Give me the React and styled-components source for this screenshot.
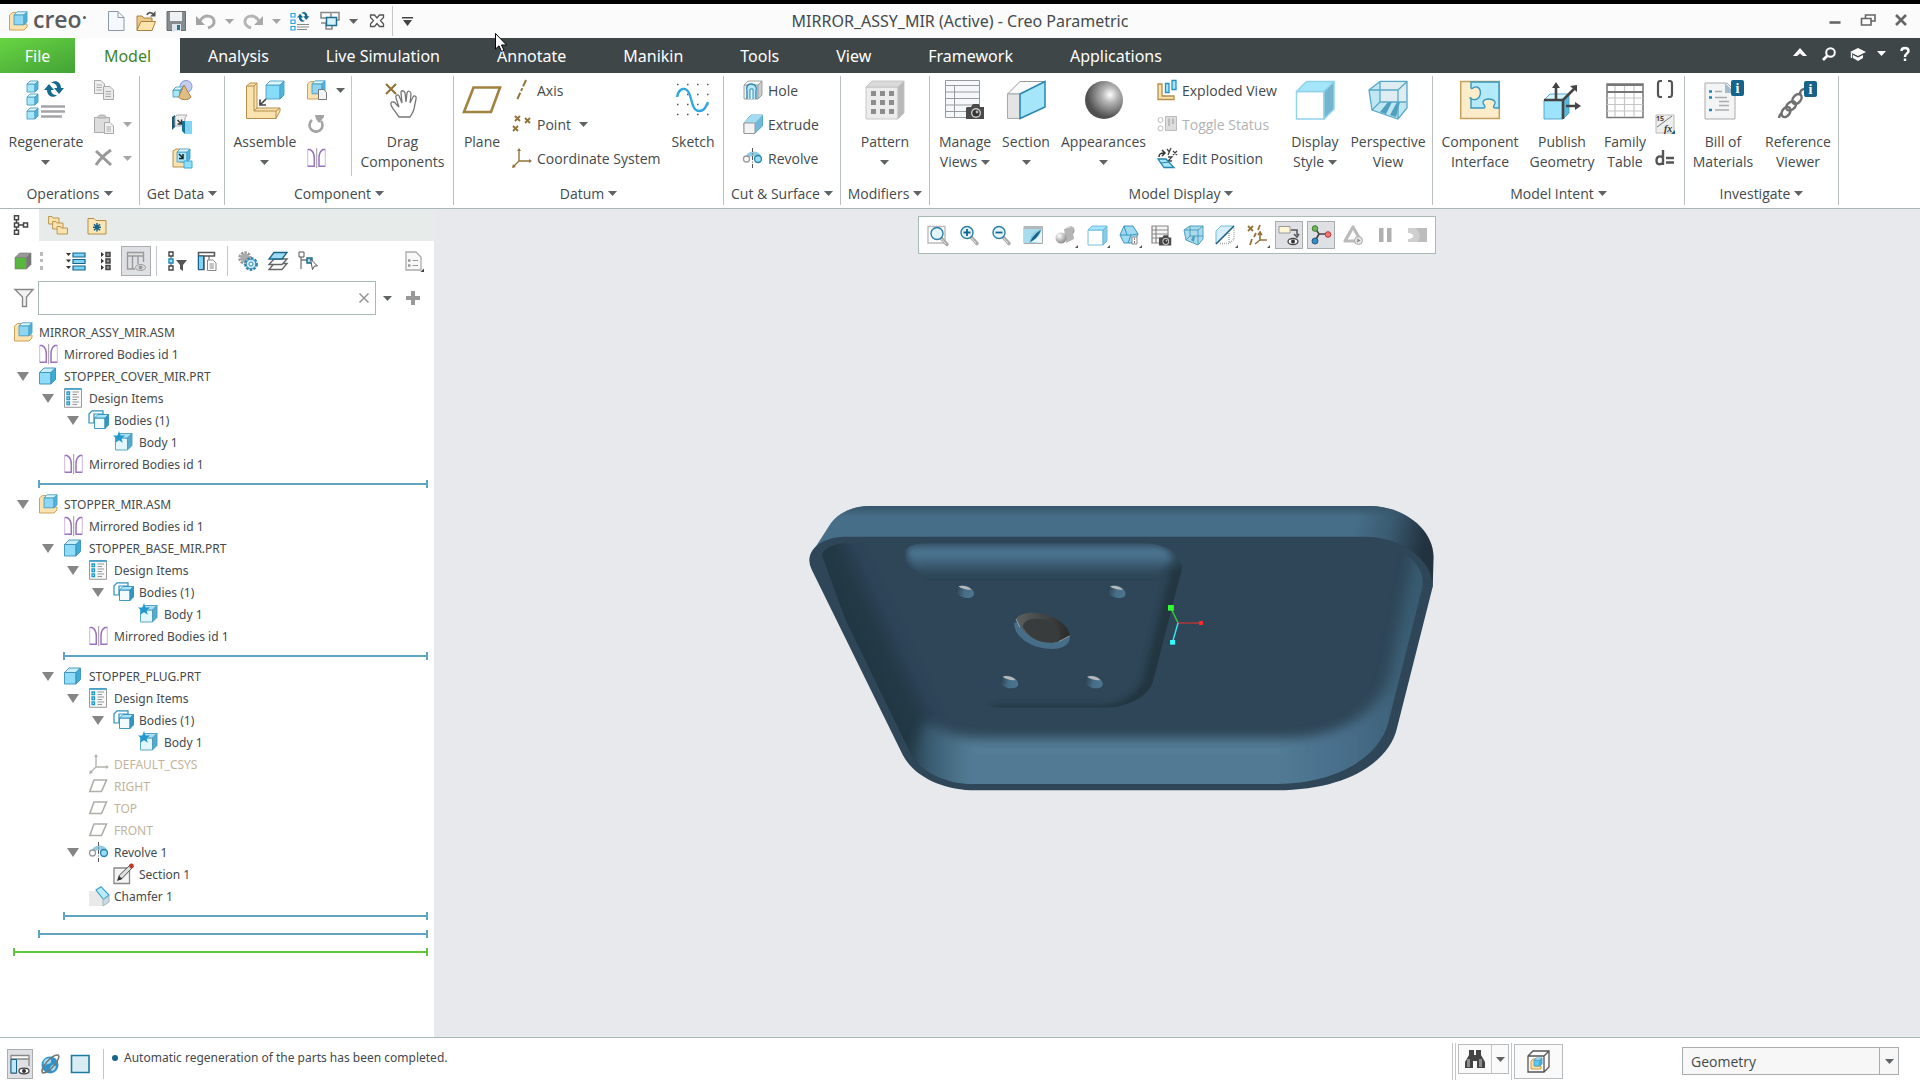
import React, { useState } from "react";
import styled, { createGlobalStyle } from "styled-components";

const GlobalStyle = createGlobalStyle`
  * { box-sizing: border-box; }
  body {
    margin: 0;
    background: #e8e9ed;
    color: #444a4c;
    font-family: "Open Sans", "Noto Sans", sans-serif;
    font-size: 14px;
  }
  button, input, select { font: inherit; color: inherit; }
`;

const UI_FONT = `"Noto Sans", "Open Sans", sans-serif`;
const SKY = "#a5e6fb";
const BLUE = "#2a86ad";
const TAN = "#fbe3b0";
const TANLINE = "#b58f4a";
const GOLD = "#94733a";

// Cubo con cara frontal, superior y lateral
const Cube = ({ x, y, s, d = s * 0.3, f = SKY, t = "#dff6fe", r = "#4fb4dc", line = "#4a9fc4", lw = 0.9 }) => (
  <g stroke={line} strokeWidth={lw} strokeLinejoin="round">
    <path d={`M${x} ${y + d}h${s - d}v${s - d}h${d - s}z`} fill={f} />
    <path d={`M${x} ${y + d}l${d} ${-d}h${s - d}l${-d} ${d}z`} fill={t} />
    <path d={`M${x + s - d} ${y + d}l${d} ${-d}v${s - d}l${-d} ${d}z`} fill={r} />
  </g>
);

const RegenArrows = () => (
  <g fill="#156a8e">
    <path d="M0 9L5 3 10 9H7C7 12 9 14 13 14 9 18 3 15 3 9z" />
    <path d="M20 7L15 13 10 7H13C13 4 11 2 7 2 11 -2 17 1 17 7z" />
  </g>
);

const Camera = () => (
  <g>
    <path d="M1 5H5L7 2H13L14 5H18V17H0V6z" fill="#4a4a4a" />
    <circle cx="10" cy="11" r="5" fill="#ccc" />
    <circle cx="10" cy="11" r="3.6" fill="#333" />
    <circle cx="11" cy="10" r="1.4" fill="#bbb" />
  </g>
);

const Mirror = ({ color = "#9a72bd" }) => (
  <g fill="none" stroke={color} strokeWidth="1.5">
    <path d="M.7 1.5H3C6 3 7.3 7 7.3 10V18.3H.7" />
    <path d="M18.3 1.5H16C13 3 12 7 12 10V18.3H18.3" />
    <path d="M.7 1.5V18.3M18.3 1.5V18.3" strokeWidth=".5" />
    <path d="M9.7 0V20" stroke="#999" strokeWidth="1" />
  </g>
);

const AsmCube = () => (
  <g>
    <path d="M.5 4L3.5 1.5H7V13H18V16L15 19H.5z" fill={TAN} stroke="#cda35a" />
    <Cube x={5} y={0.8} s={13} d={3} f="#8ed6f4" />
  </g>
);

const Folder = ({ x = 0, y = 0 }) => (
  <path transform={`translate(${x} ${y})`} d="M.6 1.5H4L5 3H11V9H.6z" fill="#fae3ad" stroke={TANLINE} strokeWidth=".9" />
);

const InfoBadge = ({ x, y }) => (
  <g transform={`translate(${x} ${y})`}>
    <rect width="13" height="16" rx="2" fill="#17648a" />
    <text x="6.5" y="13" textAnchor="middle" fontSize="14" fontWeight="700" fontFamily="Liberation Serif, serif" fill="#fff">i</text>
  </g>
);

const RevolveArt = () => (
  <g fill="none">
    <path d="M3 8C5 2 16 2 18 8L14 10C12 8 8 8 6 9z" fill="#8fcbe3" />
    <circle cx="3.5" cy="11" r="3" stroke="#999" strokeWidth="1.3" fill="#fff" />
    <circle cx="15" cy="11" r="3.5" stroke={BLUE} strokeWidth="1.4" fill="#9bdcf5" />
    <path d="M9.5 0V20" stroke="#555" strokeDasharray="4 1.5 1 1.5" />
  </g>
);

const CsysArt = ({ c = GOLD }) => (
  <g stroke={c} fill={c} strokeWidth="1.4">
    <path d="M7 2V13H18M7 13L1 19" fill="none" />
    <path d="M7 0L9 3H5zM20 13L17 15V11zM0 20L1 16 4 19z" stroke="none" />
  </g>
);

const Lens = () => (
  <g>
    <path d="M12 12L18 18.5" stroke="#aaa" strokeWidth="3.4" strokeLinecap="round" />
    <path d="M12.5 13L17 18" stroke="#e5e5e5" strokeWidth="1" />
    <circle cx="8" cy="7.5" r="6" fill="#e3f5fd" stroke="#2a7ea6" strokeWidth="1.4" />
  </g>
);

const TableArt = () => (
  <g>
    <path d="M.5.5H34.5V37.5H.5z" fill="#f5f8fb" stroke="#999" />
    <path d="M0 5.5H35M0 12H35M0 18.5H35M0 25H35M0 31.5H35M9.5 5V38" stroke="#9a9a9a" />
  </g>
);

const glyphs = {
  regenerate: (
    <>
      <Cube x={1} y={1} s={11} d={3} />
      <Cube x={1} y={14} s={11} d={3} />
      <Cube x={1} y={28} s={11} d={3} />
      <g transform="translate(18 1)"><RegenArrows /></g>
      <path d="M15 26.5H39M15 31.5H39M15 36.5H36" stroke="#a5a5a8" strokeWidth="2.4" />
    </>
  ),
  copy: (
    <g fill="#eee" stroke="#aaa">
      <path d="M.5.5H7L10.5 4V13.5H.5z" />
      <path d="M9.5 6.5H16L19.5 10V19.5H9.5z" fill="#e9e9e9" />
      <path d="M2.5 5H8M2.5 7.5H8M2.5 10H8M11.5 11.5H17M11.5 14H17M11.5 16.5H17" />
    </g>
  ),
  paste: (
    <g stroke="#aaa" fill="#ddd">
      <path d="M.5 3.5H15.5V18.5H.5z" />
      <path d="M4 4C4 1 6 1 8 1S12 1 12 4z" fill="#c9c9c9" />
      <path d="M10.5 8.5H16L19.5 12V19.5H10.5z" fill="#f0f0f0" />
      <path d="M12.5 13H17M12.5 15H17M12.5 17H17" />
    </g>
  ),
  remove: <path d="M2 3L17 17M17 2C11 6 6 11 2 17" stroke="#999" strokeWidth="3" fill="none" />,
  shapes: (
    <>
      <circle cx="14" cy="6.5" r="6" fill="#c3cdf3" stroke="#8494cf" />
      <Cube x={1} y={7} s={10} d={3} />
      <path d="M12 5L19 17C17 20.5 9 20.5 6.5 17z" fill="#e0bc80" stroke="#a98445" />
    </>
  ),
  copyGeom: (
    <>
      <path d="M0 3L3 1V13L0 16z" fill="#1c5873" />
      <path d="M3 3L5 1H15L13 4V12H3z" fill="#eee" stroke="#aaa" />
      <path d="M5.5 6L9 9.500M9.500 5.500V10H5.500" stroke="#333" strokeWidth="1.4" fill="none" />
      <path d="M13 7H20V20H13z" fill="#7fd5f5" />
      <path d="M10 7H13V20L10 17z" fill="#18729a" />
    </>
  ),
  shrinkwrap: (
    <>
      <path d="M1 3L4 1H8V14H16V19H1z" fill={TAN} stroke={TANLINE} />
      <Cube x={5} y={1} s={13} d={3} />
      <path d="M7 6L11 10M11 6V10.5H7" stroke="#222" strokeWidth="1.5" fill="none" />
      <path d="M12 13H20V20H12z" fill="#8fe0fa" stroke="#45a8d0" />
    </>
  ),
  assemble: (
    <>
      <path d="M1.5 6L5 3H12V28H35V31L31 38.5H1.5z" fill={TAN} stroke={TANLINE} />
      <path d="M1.5 6H9V31H31V38.5M9 6L12 3M9 31L12 28M31 31L35 28" fill="none" stroke={TANLINE} />
      <Cube x={21} y={1} s={18} d={4} f="#86dcfa" />
      <path d="M21 19L16 24M15 19.5V25H21" stroke="#444" strokeWidth="1.7" fill="none" />
    </>
  ),
  create: (
    <>
      <AsmCube />
      <path d="M11.5 9.5H17L19.5 12.5V19.5H11.5z" fill="#f2f5f8" stroke="#777" />
    </>
  ),
  repeat: (
    <>
      <path d="M5 6A6.5 6.5 0 1 0 14 7" fill="none" stroke="#a3a3a3" strokeWidth="2.6" />
      <path d="M8 1H17V3L12 9 9 5z" fill="#a3a3a3" />
    </>
  ),
  mirror: <Mirror />,
  drag: (
    <>
      <path d="M3 4L13 14M13 4L3 14" stroke={GOLD} strokeWidth="2.2" />
      <path d="M16 37L11 30C9 27 7 25 8 23 9 21 12 22 13 24L16 27 13 18C12 15 15 14 16 16L19 23 18 13C18 10 21 10 22 13L23 22 24 13C25 10 28 11 28 14L27 23 30 17C31 15 34 16 33 19L31 29C30 33 28 35 27 37z" fill="#fff" stroke="#777" strokeWidth="1.3" />
    </>
  ),
  plane: <path d="M11.5 7.5H38L29 32H2z" fill="none" stroke="#a1823f" strokeWidth="2.6" />,
  axis: <path d="M14 0L5 20" stroke={GOLD} strokeWidth="2" strokeDasharray="7 2 3 2" />,
  point: (
    <path d="M3 2L8 7M8 2L3 7M13 4L18 9M18 4L13 9M1 12L6 17M6 12L1 17" stroke={GOLD} strokeWidth="1.9" />
  ),
  csys: <CsysArt />,
  sketch: (
    <>
      <path d="M4 4.5H40M4 14.5H40M4 24.5H40M4 34.5H40" stroke="#555" strokeWidth="1.5" strokeDasharray="1.5 8.5" />
      <path d="M4 17C6 7 13 7 16 13C19 19 19 31 26 31C32 31 33 26 35 22" fill="none" stroke="#34a8de" strokeWidth="2.4" />
    </>
  ),
  hole: (
    <>
      <Cube x={1} y={1} s={18} d={4} f="#eee" t="#f7f7f7" r="#ccc" line="#999" />
      <path d="M4 19V11C3 8 4 4 8 4C13 4 14 8 13 11V19" fill="#b7e8fb" stroke={BLUE} strokeWidth="1.3" />
      <path d="M7 19V9H10V19" fill="#fff" stroke={BLUE} />
    </>
  ),
  extrude: (
    <>
      <path d="M1 9L8 1H19.5V12L12 19H1z" fill="#6fbad8" stroke="#5aa6c6" />
      <path d="M8 1H19.5L12 9H1z" fill="#a2dcf0" />
      <path d="M1 9H12V19.5H1z" fill="#f3f3f3" stroke="#999" />
    </>
  ),
  revolve: <RevolveArt />,
  pattern: (
    <>
      <Cube x={1} y={1} s={38} d={6} f="#ececec" t="#dadada" r="#b8b8b8" line="#c2c2c2" />
      <path d="M6 13.5H30M6 22.5H30M6 31.5H30" stroke="#8d8d8d" strokeWidth="5" strokeDasharray="5 4" />
    </>
  ),
  manage: (
    <>
      <TableArt />
      <g transform="translate(21 22)"><Camera /></g>
    </>
  ),
  section: (
    <>
      <path d="M1.5 14L14 1.5H39L14 14z" fill="#fafafa" stroke="#999" />
      <path d="M1.5 14H14V38.5H1.5z" fill="#e4e4e4" stroke="#aaa" />
      <path d="M14 14L39 1.5V27L14 38.5z" fill={SKY} stroke={BLUE} strokeWidth="1.5" />
    </>
  ),
  appearances: <circle cx="20" cy="20" r="19" fill="url(#ball)" />,
  exploded: (
    <>
      <path d="M1 4H5V16H17V19.5H1z" fill={TAN} stroke={TANLINE} strokeWidth="1.3" />
      <path d="M8.5 3.5H12V12.5H8.5zM15 .5H19V9.5H15z" fill={SKY} stroke="#2393c5" strokeWidth="1.3" />
    </>
  ),
  toggleStatus: (
    <g stroke="#bbb" fill="none">
      <circle cx="3.5" cy="6" r="2.5" />
      <circle cx="3.5" cy="14.5" r="2.5" />
      <path d="M8.5 2.5H19.5V16.5H8.5z" fill="#ddd" />
      <path d="M12 4.5V12M16 4.5V10" strokeWidth="2" />
    </g>
  ),
  editPosition: (
    <>
      <path d="M2 9C2 6 3 5 7 5M5 2L8 5 5 8" fill="none" stroke="#333" strokeWidth="1.5" />
      <path d="M10 1L12 3.5M14 0L11 7M16 3L20 7M20 3L16 7M11 9H15L11 13H15" fill="none" stroke="#444" strokeWidth="1.3" />
      <path d="M1 11H9L17 19.5H7z" fill={SKY} stroke="#2684ad" strokeWidth="1.3" />
      <path d="M4 15L12 14" stroke="#2684ad" />
    </>
  ),
  display: <Cube x={1.5} y={1.5} s={37.5} d={10} f="#fff" t={SKY} r="#74b4ce" line="#8fd2ea" lw={1.5} />,
  perspective: (
    <>
      <path d="M1 10L12 1.5H39V28L30 39 4 30z" fill="#bfe6f3" stroke="#58a9c6" strokeWidth="1.3" />
      <path d="M12 2H38V22H12z" fill="#eceff2" opacity=".7" />
      <path d="M12 32L20 22H24L18 34zM22 35L29 22H32L28 37z" fill="#4d9fbd" />
      <path d="M1 10H30V39M30 10L39 1.5M12 1.5V22L4 30M12 22H38" fill="none" stroke="#58a9c6" strokeWidth="1.3" />
    </>
  ),
  interface: (
    <>
      <path d="M.7 1.5H39.3V38.5H.7z" fill="#fdecc9" stroke="#c3a05c" strokeWidth="1.5" />
      <path d="M11 2H39V28H35C31 27 36 25 35 22C33 18 24 18 23 22C23 25 27 27 24 28H11V18C8 17 12 21 17 19C21 17 22 9 17 7C14 6 12 10 11 8z" fill="#b4ebfc" stroke="#3b98bd" strokeWidth="1.4" />
    </>
  ),
  publish: (
    <>
      <Cube x={2} y={14} s={25} d={6} f="#9ce3fb" t="#d4f4fe" r="#58b8dd" />
      <path d="M2 20H21V39M21 20L32 9M14 20V5M24 26H36" fill="none" stroke="#444" strokeWidth="2.6" />
      <path d="M14 2L18 8H10zM35 5V12L28 6zM39 26L33 30V22z" fill="#444" />
    </>
  ),
  family: (
    <>
      <path d="M2 4H38V37.5H2z" fill="#fff" stroke="#777" strokeWidth="1.5" />
      <path d="M10 5V37M19.5 5V37M29 5V37M2 18H38M2 24.5H38M2 31H38" stroke="#c5c5c5" strokeWidth="1.2" />
      <path d="M2 5H38M2 12H38" stroke="#777" strokeWidth="2.2" />
    </>
  ),
  parens: <path d="M7 1H5C4 1 3 2 3 4V14C3 16 4 17 5 17H7M13 1H15C16 1 17 2 17 4V14C17 16 16 17 15 17H13" fill="none" stroke="#555" strokeWidth="2.2" />,
  relations: (
    <>
      <path d="M1 1H19V19H1z" fill="#eee" stroke="#bbb" />
      <path d="M2 13L17 2" stroke="#777" />
      <text x="1" y="7" fontSize="7" fontWeight="700" fill="#444">15</text>
      <text x="9" y="18" fontSize="10" fontWeight="700" fontStyle="italic" fontFamily="Liberation Serif, serif" fill="#333">fx</text>
      <path d="M20 16V20H16z" fill="#17648a" />
    </>
  ),
  dEquals: (
    <>
      <path d="M8 2V17M8 9.5C5 7.5 1.5 8 1.5 12.5S5 17 8 15" fill="none" stroke="#555" strokeWidth="2.4" />
      <path d="M11 10H19M11 14.5H19" stroke="#555" strokeWidth="2.4" />
    </>
  ),
  bom: (
    <>
      <path d="M2 3H24L32 11V39H2z" fill="#f3f4f6" stroke="#aaa" />
      <path d="M22 3L32 13H22z" fill="#a4bccb" />
      <path d="M6 11.5H9M6 17.5H9M6 30H9" stroke="#1d86bd" strokeWidth="2.6" />
      <path d="M12 11.5H19M12 17.5H24M16 21.5H26M16 25.5H26M12 30H26" stroke="#aaa" strokeWidth="1.5" />
      <InfoBadge x={28} y={0} />
    </>
  ),
  refViewer: (
    <>
      <g fill="none" stroke="#707070" strokeWidth="2.5">
        <ellipse cx="8" cy="32" rx="5.5" ry="3.8" transform="rotate(-55 8 32)" />
        <ellipse cx="13" cy="26" rx="5.5" ry="3.8" transform="rotate(-40 13 26)" />
        <ellipse cx="19" cy="19" rx="5.5" ry="3.8" transform="rotate(-50 19 19)" />
        <path d="M22 15C22 10 24 9 27 9M1 38C1 35 3 34 4 33" />
      </g>
      <InfoBadge x={26} y={1} />
    </>
  ),
  logo: <AsmCube />,
  newFile: <path d="M2.5.5H12L18 6.5V19.5H2.5zM12 .5V6.5H18" fill="#f5f8fc" stroke="#8c98a5" />,
  open: (
    <>
      <path d="M1 5H6L8 7H16V19H1z" fill="#edc989" stroke="#a9803c" />
      <path d="M1 19L5 10.5H19.5L16 19.5H1z" fill="#fde4ad" stroke="#a9803c" />
      <path d="M11 4C12 1 15 1 17 3" stroke="#555" fill="none" strokeWidth="1.8" />
      <path d="M19.5 0V5.5H14z" fill="#555" />
    </>
  ),
  save: (
    <>
      <path d="M1 .5H19.5V19.5H1z" fill="#878c91" stroke="#686d71" />
      <path d="M4 1H16V10H4z" fill="#f0f1f2" />
      <path d="M6 13H15V20H6z" fill="#dbe4e9" />
      <path d="M11 14H14V19H11z" fill="#35718c" />
    </>
  ),
  undo: (
    <>
      <path d="M4 10C8 3 17 4 18 10C18.5 14 15 16 12 17" fill="none" stroke="#aaa" strokeWidth="3" />
      <path d="M0 5V14H9z" fill="#a3a3a3" />
    </>
  ),
  redo: (
    <>
      <path d="M16 10C12 3 3 4 2 10C1.5 14 5 16 8 17" fill="none" stroke="#b5b5b5" strokeWidth="3" />
      <path d="M20 5V14H11z" fill="#aaa" />
    </>
  ),
  regenSmall: (
    <>
      <path d="M1 2.5H5V6H1zM1 9H5V12.5H1zM1 15.5H5V19H1z" fill="#fff" stroke="#2aa0d8" strokeWidth="1.2" />
      <g transform="translate(7 1) scale(.62)"><RegenArrows /></g>
      <path d="M7 13.5H19M7 16H19M7 18.5H17" stroke="#888" strokeWidth="1.2" />
    </>
  ),
  windows: (
    <>
      <path d="M1 1.5H11V7H1zM12 1.5H19V9H14M1 12H6V18H12V15" fill="none" stroke="#888" strokeWidth="1.5" />
      <path d="M6.5 6.5H16.5V14.5H6.5z" fill="#d7f0fa" stroke="#1b6d92" strokeWidth="1.5" />
    </>
  ),
  closeWin: <path d="M3.5 4H7.5L10 7 12.5 4H16.5V6.5L13.5 9.5 16.5 13V15.5H12.5L10 12.5 7.5 15.5H3.5V13L6.5 9.5 3.5 6.5z" fill="#fff" stroke="#555" strokeWidth="1.3" />,
  treeTab: (
    <g transform="translate(3 0)" fill="#fff" stroke="#444" strokeWidth="1.5">
      <path d="M3.5 3V17M4 10H12" fill="none" />
      <path d="M1.5.8H5.5V4.8H1.5zM1.5 8H5.5V12H1.5zM1.5 15.2H5.5V19.2H1.5zM10.5 8H14.5V12H10.5z" />
    </g>
  ),
  foldersTab: (
    <>
      <Folder x={-1} y={0} />
      <Folder x={3} y={5} />
      <Folder x={7.5} y={10} />
    </>
  ),
  favTab: (
    <>
      <path d="M0 3.5H6L8 5.5H18V19H0z" fill="#fbe6b4" stroke={TANLINE} />
      <path d="M9 8V16.5M5 12.2H13M6 9.2L12 15.2M12 9.2L6 15.2" stroke="#17648a" strokeWidth="1.5" />
    </>
  ),
  greenCube: <Cube x={2} y={2} s={16} d={4.5} f="#56b83a" t="#999" r="#777" line="#777" lw={0.6} />,
  expandAll: (
    <>
      <path d="M7 2H19V6H7zM7 8.5H19V12.5H7zM7 15H19V19H7z" fill="#7ed4f4" stroke="#17648a" strokeWidth="1.2" />
      <path d="M0 2H5L2.5 5zM0 8.5H5L2.5 11.5zM0 15H5L2.5 18z" fill="#333" />
    </>
  ),
  collapseAll: (
    <>
      <path d="M10 1.5H14V5.5H10zM10 8H14V12H10zM10 14.5H14V18.5H10z" fill="#999" stroke="#444" strokeWidth="1.5" />
      <path d="M5 1L8 3.5 5 6zM5 7.5L8 10 5 12.5zM5 14L8 16.5 5 19z" fill="#333" />
    </>
  ),
  columns: (
    <>
      <path d="M1.5 1.5H17.5V5H1.5zM1.5 5V18H6.5V5M6.5 18H9M6.5 5H12V13M17.5 5V11" fill="none" stroke="#999" strokeWidth="1.4" />
      <ellipse cx="14.5" cy="16.5" rx="5" ry="3" fill="#ddd" stroke="#999" />
      <circle cx="14.5" cy="16.5" r="2" fill="#999" />
    </>
  ),
  treeFilter: (
    <>
      <path d="M4 1V19" stroke="#555" />
      <path d="M2 1H6V5H2zM2 15H6V19H2z" fill="#fff" stroke="#444" strokeWidth="1.4" />
      <path d="M2 8H6V12H2z" fill={SKY} stroke="#1d86bd" strokeWidth="1.4" />
      <path d="M9 9H20L16 14V20L13 18V14z" fill="#555" />
    </>
  ),
  treeColumns: (
    <>
      <path d="M1.5 1.5H17.5V5H1.5zM7 5V18.5H1.5V5" fill="#fff" stroke="#555" strokeWidth="1.5" />
      <path d="M1.5 5H6.5V18.5H1.5z" fill="#7ed4f4" stroke="#17648a" />
      <path d="M12 5V9" stroke="#555" />
      <path d="M10.5 9H16L19 12V19.5H10.5z" fill="#fff" stroke="#888" />
      <path d="M12.5 13H17M12.5 15H17M12.5 17H17" stroke="#888" />
    </>
  ),
  gears: (
    <>
      <circle cx="7" cy="7" r="5" fill="none" stroke="#999" strokeWidth="3.5" strokeDasharray="2.2 1" />
      <circle cx="7" cy="7" r="4.5" fill="#aaa" />
      <circle cx="13" cy="13" r="5.8" fill="#fff" stroke="#2d86b0" strokeWidth="2.2" strokeDasharray="2.6 1.2" />
      <circle cx="13" cy="13" r="4.8" fill="#c9ecf9" stroke="#2d86b0" />
      <circle cx="13" cy="13" r="2" fill="#fff" stroke="#2d86b0" />
    </>
  ),
  layers: (
    <>
      <path d="M6 12.5H19L14 18.5H1z" fill="#fff" stroke="#666" strokeWidth="1.4" />
      <path d="M6 8H19L14 13.5H1z" fill="#fff" stroke="#666" strokeWidth="1.4" />
      <path d="M6 1.5H19L14 8H1z" fill="#9fdcf3" stroke="#17648a" strokeWidth="1.3" />
    </>
  ),
  treeSelect: (
    <>
      <path d="M3 5V18M3 9H9" stroke="#777" fill="none" strokeWidth="1.3" />
      <path d="M1 1H6V6H1z" fill="#fff" stroke="#555" />
      <path d="M9 7H14V12H9z" fill="#9fdcf3" stroke="#17648a" strokeWidth="1.4" />
      <path d="M12.5 8L19.5 15H16.5L14.5 18.5z" fill="#fff" stroke="#555" />
    </>
  ),
  treeReport: (
    <>
      <path d="M2 1H12L17 6V19H2z" fill="#f8f8f8" stroke="#aaa" strokeWidth="1.3" />
      <path d="M4 9.5H6.5M4 14.5H6.5" stroke="#999" strokeWidth="2.4" />
      <path d="M8.5 9.5H14M8.5 14.5H14" stroke="#999" />
      <path d="M20 17.5V21H16.5z" fill="#444" />
    </>
  ),
  funnel: <path d="M1 1.5H19L12.5 9V18.5H8.5V9z" fill="#f2f2f2" stroke="#888" strokeWidth="1.4" />,
  plus: <path d="M10 3V17M3 10H17" stroke="#999" strokeWidth="4" />,
  clear: <path d="M5.5 5.5L14.5 14.5M14.5 5.5L5.5 14.5" stroke="#999" strokeWidth="1.6" />,
  asm: <AsmCube />,
  part: <Cube x={0.5} y={2} s={16} d={4.5} f="#8fdcf8" t="#c5effd" r="#3cacd9" line="#3b90b5" />,
  design: (
    <>
      <path d="M.5.7H17.5V19.3H.5z" fill="#f7f7f7" stroke="#999" />
      <path d="M.5 1H17.5" stroke="#2a9ccc" strokeWidth="1.5" />
      <path d="M3 4H5.5V6.5H3zM3 9H5.5V11.5H3zM3 14H5.5V16.5H3z" fill="#fff" stroke="#1d9bd1" strokeWidth="1.3" />
      <path d="M8.5 4H15M8.5 6.5H13M8.5 9H15M8.5 11.5H13M8.5 14H15M8.5 16.5H13" stroke="#999" />
    </>
  ),
  bodies: (
    <>
      <path d="M0 4L3 .8H14V4H5V13H0z" fill="#fff" stroke="#2d8fbb" strokeWidth="1.2" />
      <Cube x={5.5} y={4.5} s={14} d={3.5} f="#f2fbff" t="#a9e4fa" r="#3796c0" line="#2d8fbb" />
    </>
  ),
  body: (
    <>
      <Cube x={1.5} y={1.5} s={16.5} d={4.5} f="#e2f6fd" t="#a9dff3" r="#54aacb" line="#4a9dbf" />
      <path d="M5 -1L6.6 3.4 11 3.6 7.6 6.4 8.7 10.7 5 8.2 1.3 10.7 2.4 6.4 -1 3.6 3.4 3.4z" fill="#2199cf" />
    </>
  ),
  csysGray: <CsysArt c="#b5b3ae" />,
  planeGray: <path d="M5 4H17.5L12.5 15.5H.8z" fill="none" stroke="#b0aea8" strokeWidth="1.6" />,
  section1: (
    <>
      <path d="M0 4H15.5V19.5H0z" fill="#f5f5f5" stroke="#888" strokeWidth="1.3" />
      <path d="M4 15.5L5.5 11 15.5 1.5 18 4 8.5 14z" fill="#ddd" stroke="#555" />
      <circle cx="17.5" cy="2" r="2.4" fill="#c0392b" />
      <path d="M3 17L5 12 8.5 15z" fill="#333" />
    </>
  ),
  chamfer: (
    <>
      <path d="M0 5H8L14 11V20H0z" fill="#e9e9e9" />
      <path d="M7 4L12 .7 20 9 14.5 13.5z" fill="#b6ecfc" stroke="#3f9fc4" strokeWidth="1.2" />
      <path d="M14 14L20 10V16L14 20z" fill="#cfd8e0" stroke="#9bb" />
    </>
  ),
  zoomFit: (
    <>
      <path d="M1 1.5H18V18H1z" fill="none" stroke="#bbb" strokeWidth="1.4" />
      <g transform="translate(2 1)"><Lens /></g>
    </>
  ),
  zoomIn: (<><Lens /><path d="M8 4V11M4.5 7.5H11.5" stroke="#17648a" strokeWidth="1.8" /></>),
  zoomOut: (<><Lens /><path d="M4.5 7.5H11.5" stroke="#17648a" strokeWidth="1.8" /></>),
  repaint: (
    <>
      <path d="M1 1.5H19.5V18.5H1z" fill="#8fcfe6" stroke="#aaa" />
      <path d="M19 4V18L8 17C14 14 17 10 19 4z" fill="#eaf6fa" />
      <path d="M1 4H18C11 6 7 10 6 18H1z" fill="#a9dcee" />
      <path d="M18 5C14 7 9 12 7 17C12 15 16 10 18 5z" fill="#17648a" />
      <path d="M1 1H20V4H1z" fill="#b3b8bb" />
    </>
  ),
  renderOpts: (
    <>
      <circle cx="15" cy="5.5" r="4.5" fill="url(#ballLight)" />
      <path d="M9 4L17 2 19 14 11 18z" fill="#b5b5b5" />
      <circle cx="6" cy="13" r="5.5" fill="url(#ballLight)" />
    </>
  ),
  shade: <Cube x={1} y={1} s={19} d={4} f="#fff" t={SKY} r="#8bcce4" line="#64b9dc" />,
  saved: (
    <>
      <path d="M1 10L5 1H14L19 9 15 18H5z" fill="#9fdcf3" stroke="#3b95ba" />
      <path d="M1 10H12L19 9M12 10L9 18M5 1L8 10" fill="none" stroke="#3b95ba" />
      <path d="M13 12H18V19H13z" fill="#fff" stroke="#888" />
      <path d="M15 14H16M15 17H16" stroke="#555" strokeWidth="1.5" />
    </>
  ),
  viewMgr: (
    <>
      <path d="M1 1H17V18H1zM1 5H17M1 9H17M1 13H17M5 1V18" fill="#f5f5f5" stroke="#888" strokeWidth="1.2" />
      <g transform="translate(8 9) scale(.68)"><Camera /></g>
    </>
  ),
  persp: (
    <>
      <path d="M1 5L7 1H20V14L15 20 3 15z" fill="#a9dbec" stroke="#4a9fbf" />
      <path d="M1 5H15V19M15 5L20 1M7 1V11H20M7 11L3 15" fill="none" stroke="#4a9fbf" />
      <path d="M8 15L10 11H12L11 17z" fill="#4d9fbd" />
    </>
  ),
  sectionView: (
    <>
      <path d="M1 6L6 1H19L1 19z" fill="#d6effa" stroke="#6dbfe0" />
      <path d="M5 18.5H14L19 14V3M14 8V18" fill="none" stroke="#aaa" strokeDasharray="1 1" strokeWidth="1.5" />
      <path d="M1 19L19 1" stroke="#1d5c80" strokeWidth="1.6" />
    </>
  ),
  datumDisp: (
    <>
      <path d="M1 1L6 6M6 1L1 6M13 0L11 5M9 8L7 12M5 14L3 20" stroke={GOLD} strokeWidth="1.8" />
      <path d="M13 8V15H20M13 15L8 19M11 10L13 7 15 10" fill="none" stroke={GOLD} strokeWidth="1.6" />
    </>
  ),
  annot: (
    <>
      <path d="M0 1.5H11V8H0z" fill="#fff6d6" stroke="#999" />
      <path d="M12 5H18V10M15 9L18 12 20 9" fill="none" stroke="#555" strokeWidth="1.5" />
      <ellipse cx="14" cy="16.5" rx="5" ry="3" fill="#fff" stroke="#444" strokeWidth="1.3" />
      <circle cx="14" cy="16.5" r="2" fill="#333" />
    </>
  ),
  spin: (
    <>
      <path d="M4 3L8 9H16M8 9L4 16" fill="none" stroke="#444" strokeWidth="1.6" />
      <circle cx="4" cy="3.5" r="2.8" fill="#6fb65b" stroke="#3c7c2c" />
      <circle cx="17" cy="9.5" r="2.8" fill="#ee7a77" stroke="#b33" />
      <circle cx="4" cy="16" r="3" fill="#3a8cc4" stroke="#1c5a86" />
    </>
  ),
  simulate: (
    <>
      <path d="M10 2L18 16H2z" fill="none" stroke="#bbb" strokeWidth="3.2" strokeLinejoin="round" />
      <circle cx="15.5" cy="15.5" r="4" fill="#e5e5e5" stroke="#aaa" />
      <path d="M14.3 13.5L17.5 15.5 14.3 17.5z" fill="#888" />
    </>
  ),
  pause: <path d="M4 3H8.5V17H4zM12 3H16.5V17H12z" fill="#b0b0b0" />,
  stress: (
    <>
      <path d="M1 3H20V17H1V14C8 14 8 8 1 8z" fill="#cfcfcf" />
      <path d="M8 3H20V17H10C14 13 14 7 8 3z" fill="#bdbdbd" />
    </>
  ),
  navToggle: (
    <>
      <path d="M1 1.5H19V5H1zM1 5V19H7M19 5V12" fill="#fff" stroke="#888" strokeWidth="1.3" />
      <path d="M1 5.5H6.5V19H1z" fill="#bfe7f5" stroke="#17648a" />
      <ellipse cx="14" cy="17" rx="5" ry="2.8" fill="#fff" stroke="#444" strokeWidth="1.3" />
      <circle cx="14" cy="17" r="2" fill="#333" />
    </>
  ),
  globe: (
    <>
      <circle cx="10" cy="11" r="8.5" fill="#2f93c9" />
      <path d="M6 5C9 3 12 5 11 8S6 9 5 12C3 11 3 7 6 5zM12 11C15 10 17 12 15 15S10 17 10 14z" fill="#a8dcf3" />
      <path d="M3 19C-2 16 12 0 18 1C22 3 10 19 3 19z" fill="none" stroke="#777" strokeWidth="1.5" />
    </>
  ),
  screen: <path d="M1.5 1.5H19V18.5H1.5z" fill="#d9ebf3" stroke="#22799f" strokeWidth="1.6" />,
  binoculars: (
    <>
      <path d="M4 1H9V6H11V1H16V6L20 13V19H12V12H8V19H0V13L4 6z" fill="#444" />
      <path d="M2 10H5V18H2zM14 10H17V18H14z" fill="#8d8d8d" />
    </>
  ),
  selBox: (
    <>
      <path d="M1 6L6 1H22V17L17 22H1zM1 6H17V22M17 6L22 1" fill="#fafafa" stroke="#555" strokeWidth="1.3" />
      <path d="M4 11L6 9H8V16H14V19H4z" fill={TAN} stroke="#d69a3b" />
      <Cube x={7} y={8} s={8} d={2} f="#5fc6ef" />
    </>
  ),
  minimize: <path d="M4.5 12.5H15.5" stroke="#666" strokeWidth="2.6" />,
  restore: <path d="M7.5 8V5H17V11H13.5M3.5 8.5H13V15H3.5z" fill="none" stroke="#666" strokeWidth="1.6" />,
  close: <path d="M5 5L15 15M15 5L5 15" stroke="#666" strokeWidth="2.6" />,
  chevronUp: <path d="M10 4L17 12H13L10 9.5 7 12H3z" fill="#fff" />,
  search: (
    <>
      <circle cx="11.5" cy="8.5" r="4.3" fill="none" stroke="#fff" strokeWidth="2" />
      <path d="M8 12L4 16" stroke="#fff" strokeWidth="2.6" />
    </>
  ),
  learn: (
    <>
      <path d="M10 4L18 8 10 12 2 8z" fill="#fff" />
      <path d="M5 11V14L10 17 15 14V11L10 13.5z" fill="#fff" />
      <path d="M3.5 9V14" stroke="#fff" strokeWidth="1.4" />
    </>
  ),
  help: <path d="M6.5 7C6.5 3 13.5 3 13.5 7C13.5 9.5 10 9.5 10 13M10 14.5V17" fill="none" stroke="#fff" strokeWidth="2.4" />,
};

const Svg = styled.svg`
  display: block;
  flex: none;
  overflow: visible;
`;

const Icon = ({ name, size = 20 }) => (
  <Svg width={size} height={size} viewBox={`0 0 ${size} ${size}`} aria-hidden="true">{glyphs[name]}</Svg>
);

const CaretSvg = styled.svg`
  display: inline-block;
  flex: none;
  fill: ${(p) => p.$color || "#5f6365"};
`;

const Caret = ({ color }) => (
  <CaretSvg $color={color} width="9" height="5" viewBox="0 0 9 5" aria-hidden="true"><path d="M0 0H9L4.5 5z" /></CaretSvg>
);

const Page = styled.div`
  display: flex;
  flex-direction: column;
  min-height: 100vh;
  border-top: 4px solid #000;
`;

/* Barra de título */
const TitleBar = styled.header`
  display: grid;
  grid-template-columns: 1fr auto 1fr;
  align-items: center;
  height: 34px;
  background: #fbfbfb;
`;

const Title = styled.h1`
  margin: 0;
  font-family: ${UI_FONT};
  font-size: 16px;
  font-weight: 400;
`;

const QuickAccess = styled.div`
  display: flex;
  align-items: center;
  gap: 1px;
  height: 34px;
  padding-left: 9px;
`;

const Brand = styled.div`
  display: flex;
  align-items: center;
  gap: 4px;
  width: 91px;
  color: #5a5c5e;
`;

const BrandName = styled.span`
  padding-bottom: 4px;
  font-size: 23px;
  font-weight: 600;
  line-height: 22px;
`;

const BrandDot = styled.span`
  width: 3px;
  height: 3px;
  margin: 0 0 8px -3px;
  border-radius: 50%;
  background: #5a5c5e;
`;

const ToolButton = styled.button`
  display: flex;
  align-items: center;
  justify-content: center;
  flex: none;
  width: ${(p) => p.$w || 29}px;
  height: ${(p) => p.$h || 28}px;
  padding: 0;
  border: 1px solid ${(p) => (p.$on ? "#a9adb0" : "transparent")};
  background: ${(p) => (p.$on ? "#dfe0e3" : "none")};
  cursor: pointer;

  &:hover { background: #dff0f7; }
`;

const Separator = styled.span`
  flex: none;
  width: 1px;
  height: ${(p) => p.$h}px;
  margin: 0 ${(p) => p.$m || 0}px;
  background: #c3c7c9;
`;

const WindowControls = styled.div`
  display: flex;
  justify-content: flex-end;
  gap: 4px;
  padding: 0 5px 2px 0;
`;

/* Pestañas */
const TabBar = styled.nav`
  position: relative;
  display: flex;
  height: 35px;
  background: #3e4648;
`;

const Tab = styled.button`
  width: ${(p) => (p.$w ? `${p.$w}px` : "auto")};
  margin-right: ${(p) => (p.$w ? 0 : 1)}px;
  padding: 0 ${(p) => (p.$w ? 0 : 28)}px;
  border: 0;
  background: ${(p) => (p.$kind === "file" ? "linear-gradient(160deg, #68d543, #43a236)" : p.$kind === "active" ? "#fff" : "none")};
  color: ${(p) => (p.$kind === "active" ? "#3c8527" : "#fff")};
  font-family: ${UI_FONT};
  font-size: 16px;
  white-space: nowrap;
  cursor: pointer;
`;

const TabTools = styled.div`
  display: flex;
  align-items: center;
  margin-left: auto;
  padding: 0 1px 4px 0;
`;

const Pointer = styled.svg`
  position: absolute;
  left: 495px;
  top: -5px;
  z-index: 2;
`;

/* Cinta */
const Ribbon = styled.section`
  display: flex;
  height: 136px;
  background: #fff;
  border-bottom: 1px solid #aab8b9;
`;

const Group = styled.div`
  display: flex;
  flex-direction: column;
  flex: none;
  width: ${(p) => p.$w}px;
  margin: 3px 0;
  border-right: 1px solid #b9bfc1;
`;

const GroupTools = styled.div`
  display: flex;
  height: 102px;
  padding-left: ${(p) => p.$pad || 0}px;
`;

const GroupLabel = styled.button`
  display: flex;
  align-items: center;
  justify-content: center;
  gap: 4px;
  height: 28px;
  padding: 4px 0 0;
  border: 0;
  background: none;
  white-space: nowrap;
  cursor: pointer;
`;

const BigButton = styled.button`
  display: flex;
  flex-direction: column;
  align-items: center;
  flex: none;
  width: ${(p) => p.$w}px;
  padding: 4px 0 0;
  border: 0;
  background: none;
  line-height: 20px;
  white-space: nowrap;
  cursor: pointer;
`;

const BigLabel = styled.span`
  display: flex;
  align-items: center;
  flex-direction: column;
  margin-top: 12px;
`;

const BigLine = styled.span`
  display: flex;
  align-items: center;
  gap: 4px;
  height: 20px;
`;

const SmallColumn = styled.div`
  display: flex;
  flex-direction: column;
  flex: none;
  width: ${(p) => p.$w || 46}px;
  margin-top: -3px;
`;

const SmallRow = styled.div`
  display: flex;
  align-items: center;
  height: 34px;
`;

const SmallButton = styled.button`
  display: flex;
  align-items: center;
  gap: 5px;
  height: 26px;
  padding: 0 2px;
  border: 0;
  background: none;
  white-space: nowrap;
  cursor: pointer;
  &:disabled { color: #b3b3b3; }
`;

/* Panel del árbol */
const Workspace = styled.main`
  display: flex;
  flex: 1;
`;

const Navigator = styled.aside`
  flex: none;
  width: 434px;
  background: #fff;
`;

const NavTabs = styled.div`
  display: flex;
  height: 32px;
  background: #e7ebea;
`;

const NavTab = styled.button`
  display: flex;
  align-items: center;
  justify-content: center;
  width: 39px;
  padding: 0;
  border: 0;
  background: ${(p) => (p.$active ? "#fff" : "none")};
  cursor: pointer;
`;

const NavTools = styled.div`
  display: flex;
  align-items: center;
  height: 40px;
  padding: 0 5px 0 8px;
`;

const Grip = styled.span`
  width: 3px;
  height: 18px;
  margin: 0 18px 0 2px;
  border-left: 3px dotted #bbb;
`;

const Spacer = styled.span`
  flex: 1;
`;

const SearchRow = styled.div`
  display: flex;
  align-items: center;
  height: 34px;
  padding-left: 14px;
`;

const SearchBox = styled.label`
  display: flex;
  align-items: center;
  width: 338px;
  height: 34px;
  margin-left: 4px;
  padding-right: 1px;
  border: 1px solid #a9b9b6;
`;

const SearchInput = styled.input`
  flex: 1;
  min-width: 0;
  height: 30px;
  border: 0;
  outline: 0;
  background: none;
`;

const Tree = styled.ul`
  margin: 0;
  padding: 6px 6px 0 0;
  list-style: none;
  font-family: ${UI_FONT};
  font-size: 12px;
`;

const TreeRow = styled.li`
  display: flex;
  align-items: center;
  height: 22px;
  padding-left: ${(p) => p.$indent}px;
  color: ${(p) => (p.$muted ? "#bfb49b" : "#444a4c")};
  white-space: nowrap;
`;

const Toggle = styled.button`
  display: flex;
  align-items: center;
  justify-content: center;
  width: 18px;
  height: 18px;
  margin-right: 7px;
  padding: 0;
  border: 0;
  background: none;
  cursor: pointer;
`;

const TreeLabel = styled.span`
  margin-left: 5px;
`;

const InsertLine = styled.li`
  display: flex;
  align-items: center;
  height: 18px;
  margin-left: ${(p) => p.$indent}px;
  color: ${(p) => (p.$green ? "#62c63f" : "#5fa5bf")};
  &::before, &::after { content: ""; width: 2px; height: 8px; background: currentColor; }
`;

const InsertBar = styled.span`
  flex: 1;
  height: 2px;
  background: currentColor;
`;

/* Área gráfica */
const Canvas = styled.section`
  display: flex;
  flex: 1;
  flex-direction: column;
  align-items: center;
  min-width: 0;
  padding-top: 7px;
`;

const ViewBar = styled.div`
  display: flex;
  align-items: center;
  gap: 4px;
  height: 38px;
  padding: 0 4px;
  border: 1px solid #a9b9b6;
  background: #fff;
`;

const ModelSvg = styled.svg`
  width: 660px;
  height: 320px;
  margin: 236px 114px 0 0;
`;

const FlyoutMark = styled.span`
  align-self: flex-end;
  width: 0;
  margin-right: -2px;
  border-left: 3px solid transparent;
  border-bottom: 3px solid #555;
`;

/* Barra de estado */
const StatusBar = styled.footer`
  display: flex;
  align-items: flex-start;
  height: 43px;
  padding: 0 21px 0 7px;
  border-top: 1px solid #aab8b9;
  background: #fff;
`;

const StatusTools = styled.div`
  display: flex;
  align-items: center;
  gap: 2px;
  padding-top: 11px;
`;

const Message = styled.p`
  display: flex;
  align-items: center;
  gap: 6px;
  margin: 9px 0 0;
  font-family: ${UI_FONT};
  font-size: 12px;
  line-height: 22px;
  &::before { content: ""; width: 6px; height: 6px; border-radius: 50%; background: #17648a; }
`;

const StatusRight = styled.div`
  display: flex;
  align-items: flex-start;
  margin-left: auto;
  padding-top: 5px;
`;

const Framed = styled.div`
  display: flex;
  margin: 1px 2px 0;
  border: 1px solid #b9bcbe;
  background: #fafafa;
`;

const SelectWrap = styled.div`
  display: grid;
  width: 217px;
  margin: 4px 0 0 117px;
  border: 1px solid #a9adb0;
  background: #f7f7f7;
`;

const FilterSelect = styled.select`
  grid-area: 1 / 1;
  height: 26px;
  padding: 0 0 0 8px;
  border: 0;
  background: none;
  appearance: none;
`;

const SelectArrow = styled.span`
  grid-area: 1 / 1;
  justify-self: end;
  display: flex;
  align-items: center;
  justify-content: center;
  width: 19px;
  border-left: 1px solid #a9adb0;
  pointer-events: none;
`;

// Botón grande: la última línea puede llevar la flecha
const Big = ({ icon, lines, w, caret }) => (
  <BigButton type="button" $w={w}>
    <Icon name={icon} size={40} />
    <BigLabel>
      {lines.map((line, i) => (
        <BigLine key={line}>
          {line}
          {caret && lines.length > 1 && i === lines.length - 1 && <Caret />}
        </BigLine>
      ))}
      {caret && lines.length === 1 && <BigLine><Caret /></BigLine>}
    </BigLabel>
  </BigButton>
);

const Small = ({ items, w }) => (
  <SmallColumn $w={w}>
    {items.map((it) => (
      <SmallRow key={it.icon}>
        <SmallButton type="button" disabled={it.disabled} aria-label={it.label ? undefined : it.icon}>
          <Icon name={it.icon} />
          {it.label}
        </SmallButton>
        {it.caret && (
          <ToolButton type="button" $w={22} $h={26} aria-label={`${it.icon} options`}>
            <Caret color={it.gray ? "#a5a5a5" : undefined} />
          </ToolButton>
        )}
      </SmallRow>
    ))}
  </SmallColumn>
);

const RibbonGroup = ({ label, w, pad, children }) => (
  <Group $w={w}>
    <GroupTools $pad={pad}>{children}</GroupTools>
    <GroupLabel type="button">{label}<Caret /></GroupLabel>
  </Group>
);

const tabs = ["Analysis", "Live Simulation", "Annotate", "Manikin", "Tools", "View", "Framework", "Applications"];

const treeItems = [
  { level: 0, icon: "asm", text: "MIRROR_ASSY_MIR.ASM" },
  { level: 1, icon: "mirror", text: "Mirrored Bodies id 1" },
  { level: 1, icon: "part", text: "STOPPER_COVER_MIR.PRT", open: true },
  { level: 2, icon: "design", text: "Design Items", open: true },
  { level: 3, icon: "bodies", text: "Bodies (1)", open: true },
  { level: 4, icon: "body", text: "Body 1" },
  { level: 2, icon: "mirror", text: "Mirrored Bodies id 1" },
  { level: 1, line: true },
  { level: 1, icon: "asm", text: "STOPPER_MIR.ASM", open: true },
  { level: 2, icon: "mirror", text: "Mirrored Bodies id 1" },
  { level: 2, icon: "part", text: "STOPPER_BASE_MIR.PRT", open: true },
  { level: 3, icon: "design", text: "Design Items", open: true },
  { level: 4, icon: "bodies", text: "Bodies (1)", open: true },
  { level: 5, icon: "body", text: "Body 1" },
  { level: 3, icon: "mirror", text: "Mirrored Bodies id 1" },
  { level: 2, line: true },
  { level: 2, icon: "part", text: "STOPPER_PLUG.PRT", open: true },
  { level: 3, icon: "design", text: "Design Items", open: true },
  { level: 4, icon: "bodies", text: "Bodies (1)", open: true },
  { level: 5, icon: "body", text: "Body 1" },
  { level: 3, icon: "csysGray", text: "DEFAULT_CSYS", muted: true },
  { level: 3, icon: "planeGray", text: "RIGHT", muted: true },
  { level: 3, icon: "planeGray", text: "TOP", muted: true },
  { level: 3, icon: "planeGray", text: "FRONT", muted: true },
  { level: 3, icon: "revolve", text: "Revolve 1", open: true },
  { level: 4, icon: "section1", text: "Section 1" },
  { level: 3, icon: "chamfer", text: "Chamfer 1" },
  { level: 2, line: true },
  { level: 1, line: true },
  { level: 0, line: true, green: true },
];

const viewTools = [
  { icon: "zoomFit" }, { icon: "zoomIn" }, { icon: "zoomOut" }, { icon: "repaint" },
  { icon: "renderOpts", fly: true }, { icon: "shade", fly: true }, { icon: "saved", fly: true },
  { icon: "viewMgr" }, { icon: "persp" }, { icon: "sectionView", fly: true }, { icon: "datumDisp", fly: true },
  { icon: "annot", on: true }, { icon: "spin", on: true }, { icon: "simulate" }, { icon: "pause" }, { icon: "stress" },
];

const ModelTree = () => {
  const [closed, setClosed] = useState([]);

  const toggle = (index) => {
    setClosed(closed.includes(index) ? closed.filter((i) => i !== index) : [...closed, index]);
  };

  // Oculta los hijos de los nodos cerrados
  let hideBelow = null;
  return (
    <Tree>
      {treeItems.map((item, index) => {
        if (hideBelow !== null && item.level > hideBelow) return null;
        hideBelow = closed.includes(index) ? item.level : null;
        if (item.line) {
          return <InsertLine key={index} $indent={13 + item.level * 25} $green={item.green}><InsertBar /></InsertLine>;
        }
        return (
          <TreeRow key={index} $muted={item.muted} $indent={14 + (item.open ? item.level - 1 : item.level) * 25}>
            {item.open && (
              <Toggle type="button" aria-label={`Toggle ${item.text}`} onClick={() => toggle(index)}>
                <svg width="12" height="9" viewBox="0 0 12 9"><path d="M0 0H12L6 9z" fill="#858585" /></svg>
              </Toggle>
            )}
            <Icon name={item.icon} />
            <TreeLabel>{item.text}</TreeLabel>
          </TreeRow>
        );
      })}
    </Tree>
  );
};

const CAVITY = "M70 217C70 182 98 158 140 158H1365C1420 160 1450 180 1468 197C1495 225 1506 255 1503 290L1421 700C1400 800 1300 882 1155 882H425C370 880 315 845 292 805L78 250Q70 233 70 217z";
const PAD = "M272 195C272 172 290 160 320 160H850C900 165 932 195 931 238L862 575C852 620 800 653 745 653H490C460 650 440 625 430 600L315 250C290 240 272 220 272 195z";

const Bolt = ({ x, y }) => (
  <g transform={`translate(${x} ${y})`}>
    <path d="M-22 -7C-22 -16 -12 -20 -2 -19C12 -16 22 -5 22 6C22 14 16 19 5 19C-10 18 -22 6 -22 -7z" fill="url(#bolt)" />
    <path d="M-15 -16C-6 -21 10 -16 16 -6C8 -4 -8 -8 -15 -16z" fill="#b8b8ba" />
  </g>
);

const PartModel = () => (
  <ModelSvg viewBox="0 0 660 320" aria-label="Part model">
    <defs>
      <linearGradient id="outer" x1="1360" x2="1530" y1="0" y2="30" gradientUnits="userSpaceOnUse">
        <stop offset="0" stopColor="#476e88" />
        <stop offset=".5" stopColor="#3a5a70" />
        <stop offset="1" stopColor="#22323f" />
      </linearGradient>
      <linearGradient id="topShade" x1="0" x2="0" y1="48" y2="80" gradientUnits="userSpaceOnUse">
        <stop offset="0" stopColor="#365569" />
        <stop offset="1" stopColor="#365569" stopOpacity="0" />
      </linearGradient>
      <linearGradient id="leftWall" x1="115" y1="330" x2="235" y2="285" gradientUnits="userSpaceOnUse">
        <stop offset="0" stopColor="#223744" />
        <stop offset=".35" stopColor="#233946" />
        <stop offset=".75" stopColor="#2d4357" />
        <stop offset="1" stopColor="#2e4657" />
      </linearGradient>
      <linearGradient id="bottomWall" x1="290" x2="1500" y1="0" y2="0" gradientUnits="userSpaceOnUse">
        <stop offset="0" stopColor="#2a4252" />
        <stop offset=".03" stopColor="#385a6f" />
        <stop offset=".11" stopColor="#527a94" />
        <stop offset=".72" stopColor="#527a94" />
        <stop offset=".84" stopColor="#496f8c" />
        <stop offset=".93" stopColor="#40657d" />
        <stop offset="1" stopColor="#375a70" />
      </linearGradient>
      <linearGradient id="padTop" x1="0" x2="0" y1="158" y2="250" gradientUnits="userSpaceOnUse">
        <stop offset="0" stopColor="#2e4657" />
        <stop offset=".28" stopColor="#507a97" />
        <stop offset=".55" stopColor="#446983" />
        <stop offset="1" stopColor="#2e4657" />
      </linearGradient>
      <linearGradient id="bolt" x1="-20" x2="20" y1="0" y2="8" gradientUnits="userSpaceOnUse">
        <stop offset="0" stopColor="#2b4455" />
        <stop offset=".5" stopColor="#476e88" />
        <stop offset="1" stopColor="#4c7591" />
      </linearGradient>
      <linearGradient id="bore" x1="540" x2="665" y1="0" y2="0" gradientUnits="userSpaceOnUse">
        <stop offset="0" stopColor="#5a5f60" />
        <stop offset="1" stopColor="#2a2b2b" />
      </linearGradient>
      <filter id="soft" x="-10%" y="-20%" width="120%" height="140%"><feGaussianBlur stdDeviation="16" /></filter>
      <filter id="softer" x="-20%" y="-30%" width="140%" height="160%"><feGaussianBlur stdDeviation="9" /></filter>
      <clipPath id="cavityClip"><path d={CAVITY} /></clipPath>
      <clipPath id="padClip"><path d={PAD} /></clipPath>
    </defs>
    <g transform="scale(.4209 .3333)">
      <path d="M56 180L97 100C115 68 150 48 190 48H1380C1465 50 1532 125 1529 205L1527 290H1300V200H80z" fill="url(#outer)" />
      <path d="M97 100C115 68 150 48 190 48H1380C1430 50 1470 75 1495 105z" fill="url(#topShade)" />
      <path d="M46 212C46 172 80 140 135 140H1365C1450 140 1527 205 1527 290L1442 715C1425 810 1330 901 1155 901H430C350 897 290 850 268 795L52 240Q46 226 46 212z" fill="#2e4657" />
      <g clipPath="url(#cavityClip)">
        <path d="M60 140H180L400 730 300 860 250 800z" fill="url(#leftWall)" />
        <path d="M322 690C360 722 390 742 450 744H1180C1310 744 1400 660 1425 560L1485 180H1560V940H260L290 805z" fill="url(#bottomWall)" filter="url(#soft)" />
        <path d="M430 778H1190V790H430z" fill="#5a849e" opacity=".5" filter="url(#softer)" />
      </g>
      <g clipPath="url(#padClip)">
        <path d={PAD} fill="#2e4657" />
        <path d="M285 162H860C890 170 915 190 905 215L880 250H310C285 235 270 190 285 162z" fill="url(#padTop)" filter="url(#softer)" />
        <path d="M310 158H850L880 180 870 250H320L290 190z" fill="url(#padTop)" opacity=".7" filter="url(#softer)" />
        <path d="M940 215L905 240 838 570C820 620 780 645 740 647H480V670H900z" fill="#213541" filter="url(#softer)" />
      </g>
      <Bolt x={415} y={305} />
      <Bolt x={775} y={305} />
      <Bolt x={520} y={576} />
      <Bolt x={721} y={576} />
      <path d="M533 398C530 440 575 477 620 477C650 477 665 462 665 440L600 380z" fill="#476e88" />
      <path d="M537 387C548 365 590 362 625 382C650 397 665 420 664 437C655 448 640 453 625 458C585 460 555 435 537 387z" fill="url(#bore)" />
      <path d="M553 410C556 385 590 380 618 395C640 408 648 435 636 454C600 464 570 448 553 410z" fill="#393c3d" />
      <path d="M537 387L546 412M640 454L664 438" stroke="#aeb3b5" strokeWidth="2" />
      <g fill="none" strokeWidth="3.5">
        <path d="M922 399L905 354" stroke="#35c935" />
        <path d="M922 399H976" stroke="#a5383e" strokeWidth="5" />
        <path d="M922 399L909 456" stroke="#35e8ee" />
      </g>
      <path d="M898 345H912V362H898z" fill="#33ff33" />
      <path d="M972 393H981V405H972z" fill="#ff2a2a" />
      <path d="M903 450H915V464H903z" fill="#35ffff" />
    </g>
  </ModelSvg>
);

const SharedDefs = styled.svg`
  position: absolute;
  width: 0;
  height: 0;
`;

export default function App() {
  const [query, setQuery] = useState("");

  return (
    <Page>
      <GlobalStyle />
      <SharedDefs aria-hidden="true">
        <defs>
          <radialGradient id="ball" cx=".66" cy=".36" r=".6">
            <stop offset="0" stopColor="#fff" />
            <stop offset=".35" stopColor="#b5b5b5" />
            <stop offset="1" stopColor="#505050" />
          </radialGradient>
          <radialGradient id="ballLight" cx=".35" cy=".3" r=".8">
            <stop offset="0" stopColor="#fff" />
            <stop offset="1" stopColor="#808080" />
          </radialGradient>
        </defs>
      </SharedDefs>

      <TitleBar>
        <QuickAccess>
          <Brand><Icon name="logo" /><BrandName>creo</BrandName><BrandDot /></Brand>
          {["newFile", "open", "save", "undo"].map((n) => (
            <ToolButton key={n} type="button" aria-label={n}><Icon name={n} /></ToolButton>
          ))}
          <ToolButton type="button" $w={16} aria-label="undo list"><Caret color="#a5a5a5" /></ToolButton>
          <ToolButton type="button" aria-label="redo"><Icon name="redo" /></ToolButton>
          <ToolButton type="button" $w={16} aria-label="redo list"><Caret color="#a5a5a5" /></ToolButton>
          <ToolButton type="button" aria-label="regenerate"><Icon name="regenSmall" /></ToolButton>
          <ToolButton type="button" aria-label="windows"><Icon name="windows" /></ToolButton>
          <ToolButton type="button" $w={16} aria-label="windows list"><Caret /></ToolButton>
          <ToolButton type="button" aria-label="close window"><Icon name="closeWin" /></ToolButton>
          <Separator $h={30} />
          <ToolButton type="button" $w={26} aria-label="customize">
            <svg width="11" height="9" viewBox="0 0 11 9"><path d="M0 0H11V1.5H0zM1 3H10L5.5 9z" fill="#444" /></svg>
          </ToolButton>
        </QuickAccess>
        <Title>MIRROR_ASSY_MIR (Active) - Creo Parametric</Title>
        <WindowControls>
          {["minimize", "restore", "close"].map((n) => (
            <ToolButton key={n} type="button" aria-label={n}><Icon name={n} /></ToolButton>
          ))}
        </WindowControls>
      </TitleBar>

      <TabBar>
        <Tab type="button" $kind="file" $w={75}>File</Tab>
        <Tab type="button" $kind="active" $w={105}>Model</Tab>
        {tabs.map((t) => <Tab key={t} type="button">{t}</Tab>)}
        <TabTools>
          <ToolButton type="button" aria-label="minimize ribbon"><Icon name="chevronUp" /></ToolButton>
          <ToolButton type="button" aria-label="search"><Icon name="search" /></ToolButton>
          <ToolButton type="button" aria-label="learning"><Icon name="learn" /></ToolButton>
          <ToolButton type="button" $w={18} aria-label="learning list"><Caret color="#fff" /></ToolButton>
          <ToolButton type="button" aria-label="help"><Icon name="help" /></ToolButton>
        </TabTools>
        <Pointer width="13" height="20" viewBox="0 0 13 20" aria-hidden="true">
          <path d="M.5.5V16L4 12.8 6.5 18.5 9 17.3 6.5 12H11.5z" fill="#fff" stroke="#000" />
        </Pointer>
      </TabBar>

      <Ribbon>
        <RibbonGroup label="Operations" w={140}>
          <Big icon="regenerate" lines={["Regenerate"]} w={92} caret />
          <Small items={[{ icon: "copy" }, { icon: "paste", caret: true, gray: true }, { icon: "remove", caret: true, gray: true }]} />
        </RibbonGroup>
        <RibbonGroup label="Get Data" w={85} pad={30}>
          <Small items={[{ icon: "shapes" }, { icon: "copyGeom" }, { icon: "shrinkwrap" }]} />
        </RibbonGroup>
        <RibbonGroup label="Component" w={229}>
          <Big icon="assemble" lines={["Assemble"]} w={80} caret />
          <Small items={[{ icon: "create", caret: true }, { icon: "repeat" }, { icon: "mirror" }]} />
          <Separator $h={100} />
          <Big icon="drag" lines={["Drag", "Components"]} w={101} />
        </RibbonGroup>
        <RibbonGroup label="Datum" w={270}>
          <Big icon="plane" lines={["Plane"]} w={56} />
          <Small w={153} items={[{ icon: "axis", label: "Axis" }, { icon: "point", label: "Point", caret: true }, { icon: "csys", label: "Coordinate System" }]} />
          <Big icon="sketch" lines={["Sketch"]} w={60} />
        </RibbonGroup>
        <RibbonGroup label="Cut & Surface" w={117} pad={17}>
          <Small items={[{ icon: "hole", label: "Hole" }, { icon: "extrude", label: "Extrude" }, { icon: "revolve", label: "Revolve" }]} />
        </RibbonGroup>
        <RibbonGroup label="Modifiers" w={89}>
          <Big icon="pattern" lines={["Pattern"]} w={88} caret />
        </RibbonGroup>
        <RibbonGroup label="Model Display" w={503}>
          <Big icon="manage" lines={["Manage", "Views"]} w={70} caret />
          <Big icon="section" lines={["Section"]} w={52} caret />
          <Big icon="appearances" lines={["Appearances"]} w={103} caret />
          <Small w={128} items={[{ icon: "exploded", label: "Exploded View" }, { icon: "toggleStatus", label: "Toggle Status", disabled: true }, { icon: "editPosition", label: "Edit Position" }]} />
          <Big icon="display" lines={["Display", "Style"]} w={64} caret />
          <Big icon="perspective" lines={["Perspective", "View"]} w={82} />
        </RibbonGroup>
        <RibbonGroup label="Model Intent" w={252}>
          <Big icon="interface" lines={["Component", "Interface"]} w={94} />
          <Big icon="publish" lines={["Publish", "Geometry"]} w={70} />
          <Big icon="family" lines={["Family", "Table"]} w={56} />
          <Small w={24} items={[{ icon: "parens" }, { icon: "relations" }, { icon: "dEquals" }]} />
        </RibbonGroup>
        <RibbonGroup label="Investigate" w={154}>
          <Big icon="bom" lines={["Bill of", "Materials"]} w={76} />
          <Big icon="refViewer" lines={["Reference", "Viewer"]} w={74} />
        </RibbonGroup>
      </Ribbon>

      <Workspace>
        <Navigator>
          <NavTabs>
            <NavTab type="button" $active aria-label="Model Tree"><Icon name="treeTab" /></NavTab>
            <NavTab type="button" aria-label="Folder Browser"><Icon name="foldersTab" /></NavTab>
            <NavTab type="button" aria-label="Favorites"><Icon name="favTab" /></NavTab>
          </NavTabs>
          <NavTools>
            <ToolButton type="button" $w={30} $h={30} aria-label="tree mode"><Icon name="greenCube" /></ToolButton>
            <Grip />
            <ToolButton type="button" $w={30} $h={30} aria-label="expand all"><Icon name="expandAll" /></ToolButton>
            <ToolButton type="button" $w={30} $h={30} aria-label="collapse all"><Icon name="collapseAll" /></ToolButton>
            <ToolButton type="button" $w={30} $h={30} $on aria-label="columns"><Icon name="columns" /></ToolButton>
            <Separator $h={30} $m={5} />
            <ToolButton type="button" $w={30} $h={30} aria-label="tree filter"><Icon name="treeFilter" /></ToolButton>
            <ToolButton type="button" $w={30} $h={30} aria-label="tree columns"><Icon name="treeColumns" /></ToolButton>
            <Separator $h={30} $m={5} />
            <ToolButton type="button" $w={30} $h={30} aria-label="settings"><Icon name="gears" /></ToolButton>
            <ToolButton type="button" $w={30} $h={30} aria-label="layers"><Icon name="layers" /></ToolButton>
            <ToolButton type="button" $w={30} $h={30} aria-label="select in tree"><Icon name="treeSelect" /></ToolButton>
            <Spacer />
            <ToolButton type="button" $w={30} $h={30} aria-label="report"><Icon name="treeReport" /></ToolButton>
          </NavTools>
          <SearchRow>
            <Icon name="funnel" />
            <SearchBox>
              <SearchInput type="text" aria-label="Search tree" value={query} onChange={(e) => setQuery(e.target.value)} />
              <ToolButton type="button" $w={20} aria-label="clear" onClick={() => setQuery("")}><Icon name="clear" /></ToolButton>
            </SearchBox>
            <ToolButton type="button" $w={22} aria-label="search options"><Caret /></ToolButton>
            <ToolButton type="button" aria-label="add"><Icon name="plus" /></ToolButton>
          </SearchRow>
          <ModelTree />
        </Navigator>

        <Canvas>
          <ViewBar>
            {viewTools.map((t) => (
              <ToolButton key={t.icon} type="button" $w={28} $on={t.on} aria-label={t.icon}>
                <Icon name={t.icon} />
                {t.fly && <FlyoutMark />}
              </ToolButton>
            ))}
          </ViewBar>
          <PartModel />
        </Canvas>
      </Workspace>

      <StatusBar>
        <StatusTools>
          <ToolButton type="button" $w={26} $h={30} $on aria-label="navigator"><Icon name="navToggle" /></ToolButton>
          <ToolButton type="button" $w={30} $h={30} aria-label="browser"><Icon name="globe" /></ToolButton>
          <ToolButton type="button" $w={26} $h={30} aria-label="full screen"><Icon name="screen" /></ToolButton>
          <Separator $h={30} $m={8} />
        </StatusTools>
        <Message>Automatic regeneration of the parts has been completed.</Message>
        <StatusRight>
          <Separator $h={37} $m={2} />
          <Separator $h={37} />
          <Framed>
            <ToolButton type="button" $w={32} aria-label="find"><Icon name="binoculars" /></ToolButton>
            <Separator $h={28} />
            <ToolButton type="button" $w={16} aria-label="find options"><Caret /></ToolButton>
          </Framed>
          <Separator $h={37} />
          <Framed>
            <ToolButton type="button" $w={47} $h={33} aria-label="selection box"><Icon name="selBox" size={23} /></ToolButton>
          </Framed>
          <SelectWrap>
            <FilterSelect aria-label="Selection filter" defaultValue="Geometry">
              <option>Geometry</option>
              <option>Parts</option>
              <option>Features</option>
            </FilterSelect>
            <SelectArrow><Caret /></SelectArrow>
          </SelectWrap>
        </StatusRight>
      </StatusBar>
    </Page>
  );
}
